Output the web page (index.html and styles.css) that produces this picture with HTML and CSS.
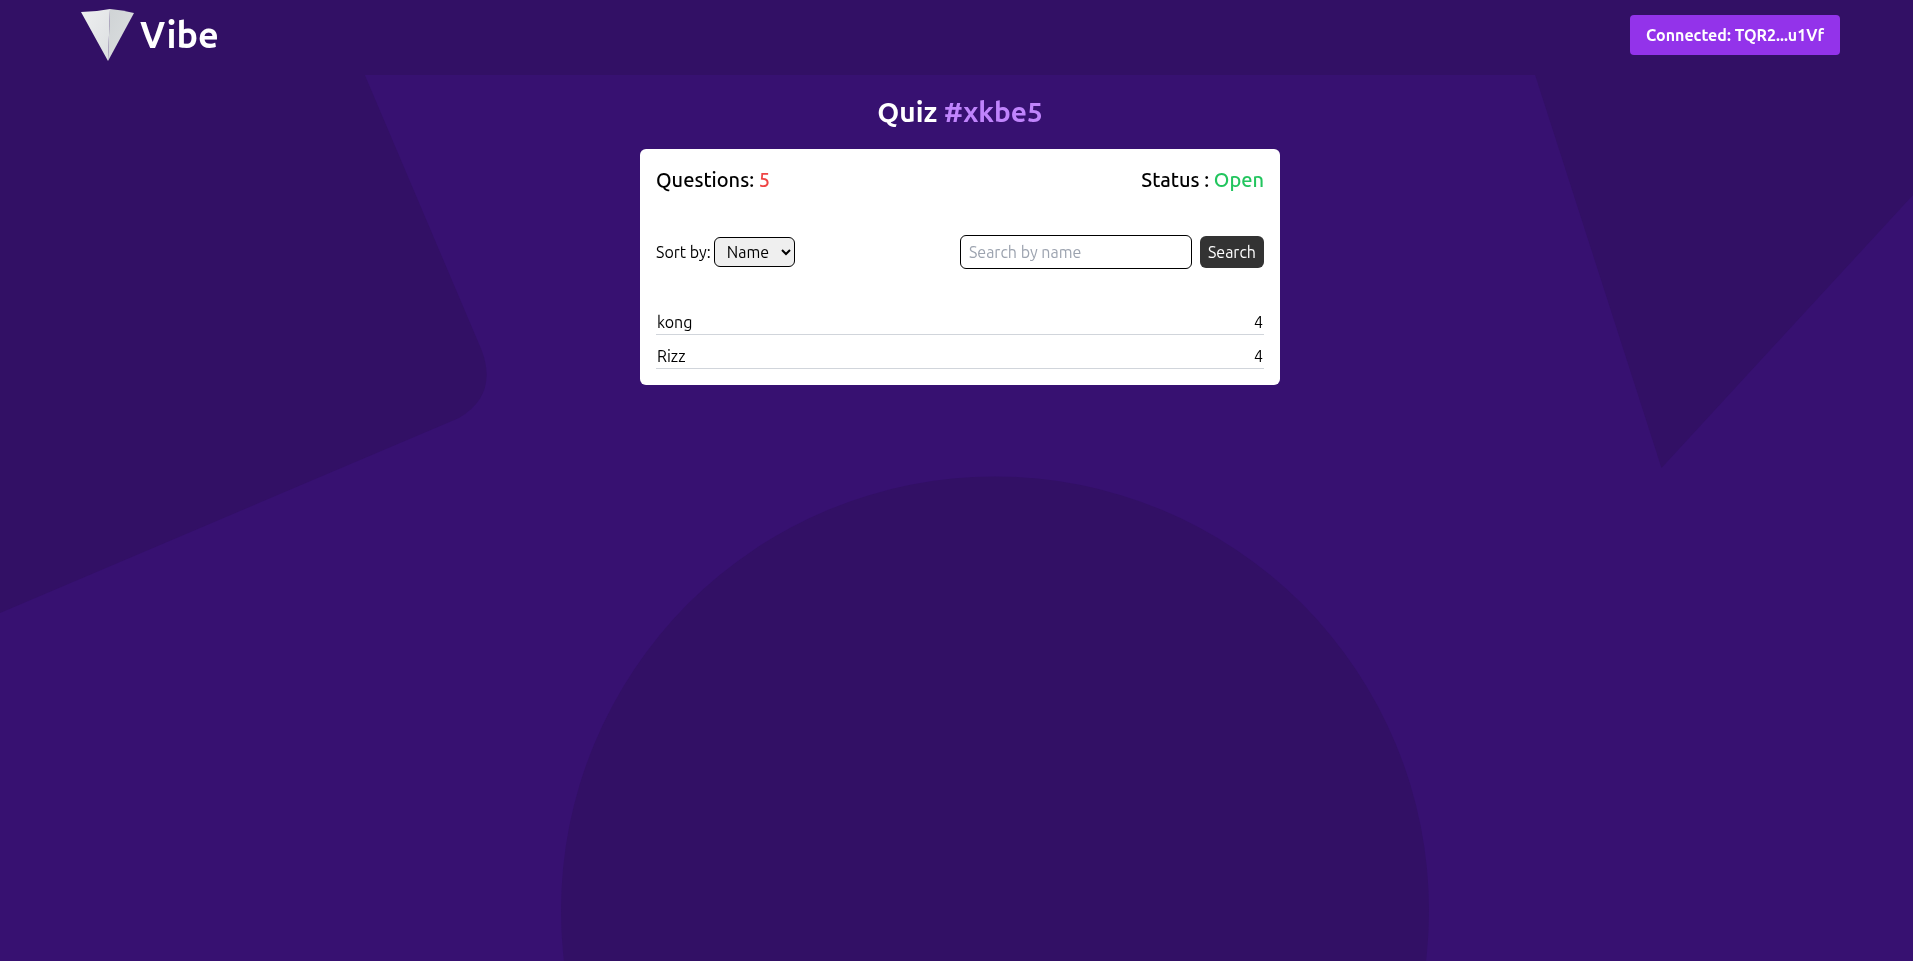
FILE: index.html
```html
<!DOCTYPE html>
<html lang="en">
<head>
  <meta charset="UTF-8">
  <meta name="viewport" content="width=device-width, initial-scale=1">
  <title>Vibe - Quiz</title>
  <link rel="stylesheet" href="styles.css">
</head>
<body>
  <!-- Background shapes -->
  <svg class="backdrop" viewBox="0 0 1913 961" preserveAspectRatio="xMidYMid slice" aria-hidden="true">
    <path d="M0 0H333L482 351Q498 395 459 418L0 613Z"/>
    <path d="M1511 0L1661.500 468L1913 195V0Z"/>
    <circle cx="995" cy="910.500" r="434"/>
  </svg>

  <header class="navbar">
    <a class="brand" href="#">
      <svg class="logo" viewBox="0 0 54 54" aria-hidden="true">
        <defs>
          <linearGradient id="leftFace" x1="0" y1="0" x2="1" y2="1">
            <stop offset="0" stop-color="#eeeff0"/>
            <stop offset="1" stop-color="#dcdfe1"/>
          </linearGradient>
          <linearGradient id="rightFace" x1="0" y1="0" x2="1" y2="1">
            <stop offset="0" stop-color="#cfd3d5"/>
            <stop offset="1" stop-color="#dde0e1"/>
          </linearGradient>
        </defs>
        <path fill="url(#leftFace)" d="M0 4Q14 4 29 1L27 53Z"/>
        <path fill="url(#rightFace)" d="M29 1Q41 2 53 5L27 53Z"/>
      </svg>
      <span>Vibe</span>
    </a>
    <button class="wallet" type="button">Connected: TQR2...u1Vf</button>
  </header>

  <main>
    <h1>Quiz <span class="quiz-id">#xkbe5</span></h1>

    <section class="card">
      <div class="summary">
        <p>Questions: <span class="count">5</span></p>
        <p>Status : <span class="open">Open</span></p>
      </div>

      <form class="toolbar">
        <div class="sort">
          <label for="sort">Sort by:</label>
          <select id="sort">
            <option>Name</option>
            <option>Score</option>
          </select>
        </div>
        <div class="search">
          <input type="text" id="search" placeholder="Search by name" aria-label="Search by name">
          <button type="button">Search</button>
        </div>
      </form>

      <table>
        <tbody>
          <tr><td>kong</td><td class="score">4</td></tr>
          <tr><td>Rizz</td><td class="score">4</td></tr>
        </tbody>
      </table>
    </section>
  </main>
</body>
</html>
```
FILE: styles.css
```css
* {
  box-sizing: border-box;
}
body {
  margin: 0;
  min-height: 100vh;
  background: #371171;
  color: #000;
  font-family: Ubuntu, "Noto Sans", sans-serif;
  font-size: 16px;
  line-height: 24px;
}
h1, p {
  margin: 0;
}
button, input, select {
  font: inherit;
}
button {
  border: 0;
  cursor: pointer;
}
.backdrop {
  position: fixed;
  inset: 0;
  z-index: -1;
  width: 100%;
  height: 100%;
  fill: #321065;
}

/* Header */
.navbar {
  display: flex;
  justify-content: space-between;
  align-items: flex-start;
  height: 75px;
  padding: 0 73px 0 81px;
  background: #321065;
}
.brand {
  display: flex;
  align-items: center;
  gap: 5px;
  height: 70px;
  color: #fff;
  font-size: 36px;
  font-weight: 600;
  line-height: 40px;
  text-decoration: none;
}
.logo {
  width: 54px;
  height: 54px;
}
.wallet {
  height: 40px;
  margin-top: 15px;
  padding: 0 16px;
  border-radius: 4px;
  background: #9333ea;
  color: #fff;
  font-weight: 600;
}

/* Quiz */
main {
  display: flex;
  flex-direction: column;
  align-items: center;
  padding: 19px 0 32px 7px;
}
h1 {
  margin-bottom: 19px;
  color: #fff;
  font-size: 28px;
  font-weight: 600;
  line-height: 36px;
}
.quiz-id {
  color: #c084fc;
}
.card {
  width: 100%;
  max-width: 640px;
  padding: 16px;
  border-radius: 6px;
  background: #fff;
}
.summary {
  display: flex;
  justify-content: space-between;
  font-size: 20px;
  font-weight: 500;
  line-height: 30px;
}
.count {
  color: #ef4444;
}
.open {
  color: #22c55e;
}
.toolbar {
  display: flex;
  justify-content: space-between;
  align-items: center;
  margin: 40px 0 32px;
}
.sort, .search {
  display: flex;
  align-items: center;
}
.sort {
  gap: 3px;
}
.search {
  gap: 8px;
}
.sort select {
  width: 81px;
  height: 30px;
  padding: 0 8px;
  border: 1px solid #000;
  border-radius: 6px;
  background-color: #efefef;
  color: #000;
}
.search input {
  width: 232px;
  height: 34px;
  padding: 0 8px;
  border: 1px solid #000;
  border-radius: 6px;
}
.search input::placeholder {
  color: #9ca3af;
}
.search button {
  height: 32px;
  padding: 0 8px;
  border-radius: 6px;
  background: #333;
  color: #fff;
}
table {
  width: 100%;
  border-collapse: collapse;
}
td {
  padding: 9px 1px 0;
  border-bottom: 1px solid #d1d5db;
}
.score {
  text-align: right;
}
```
